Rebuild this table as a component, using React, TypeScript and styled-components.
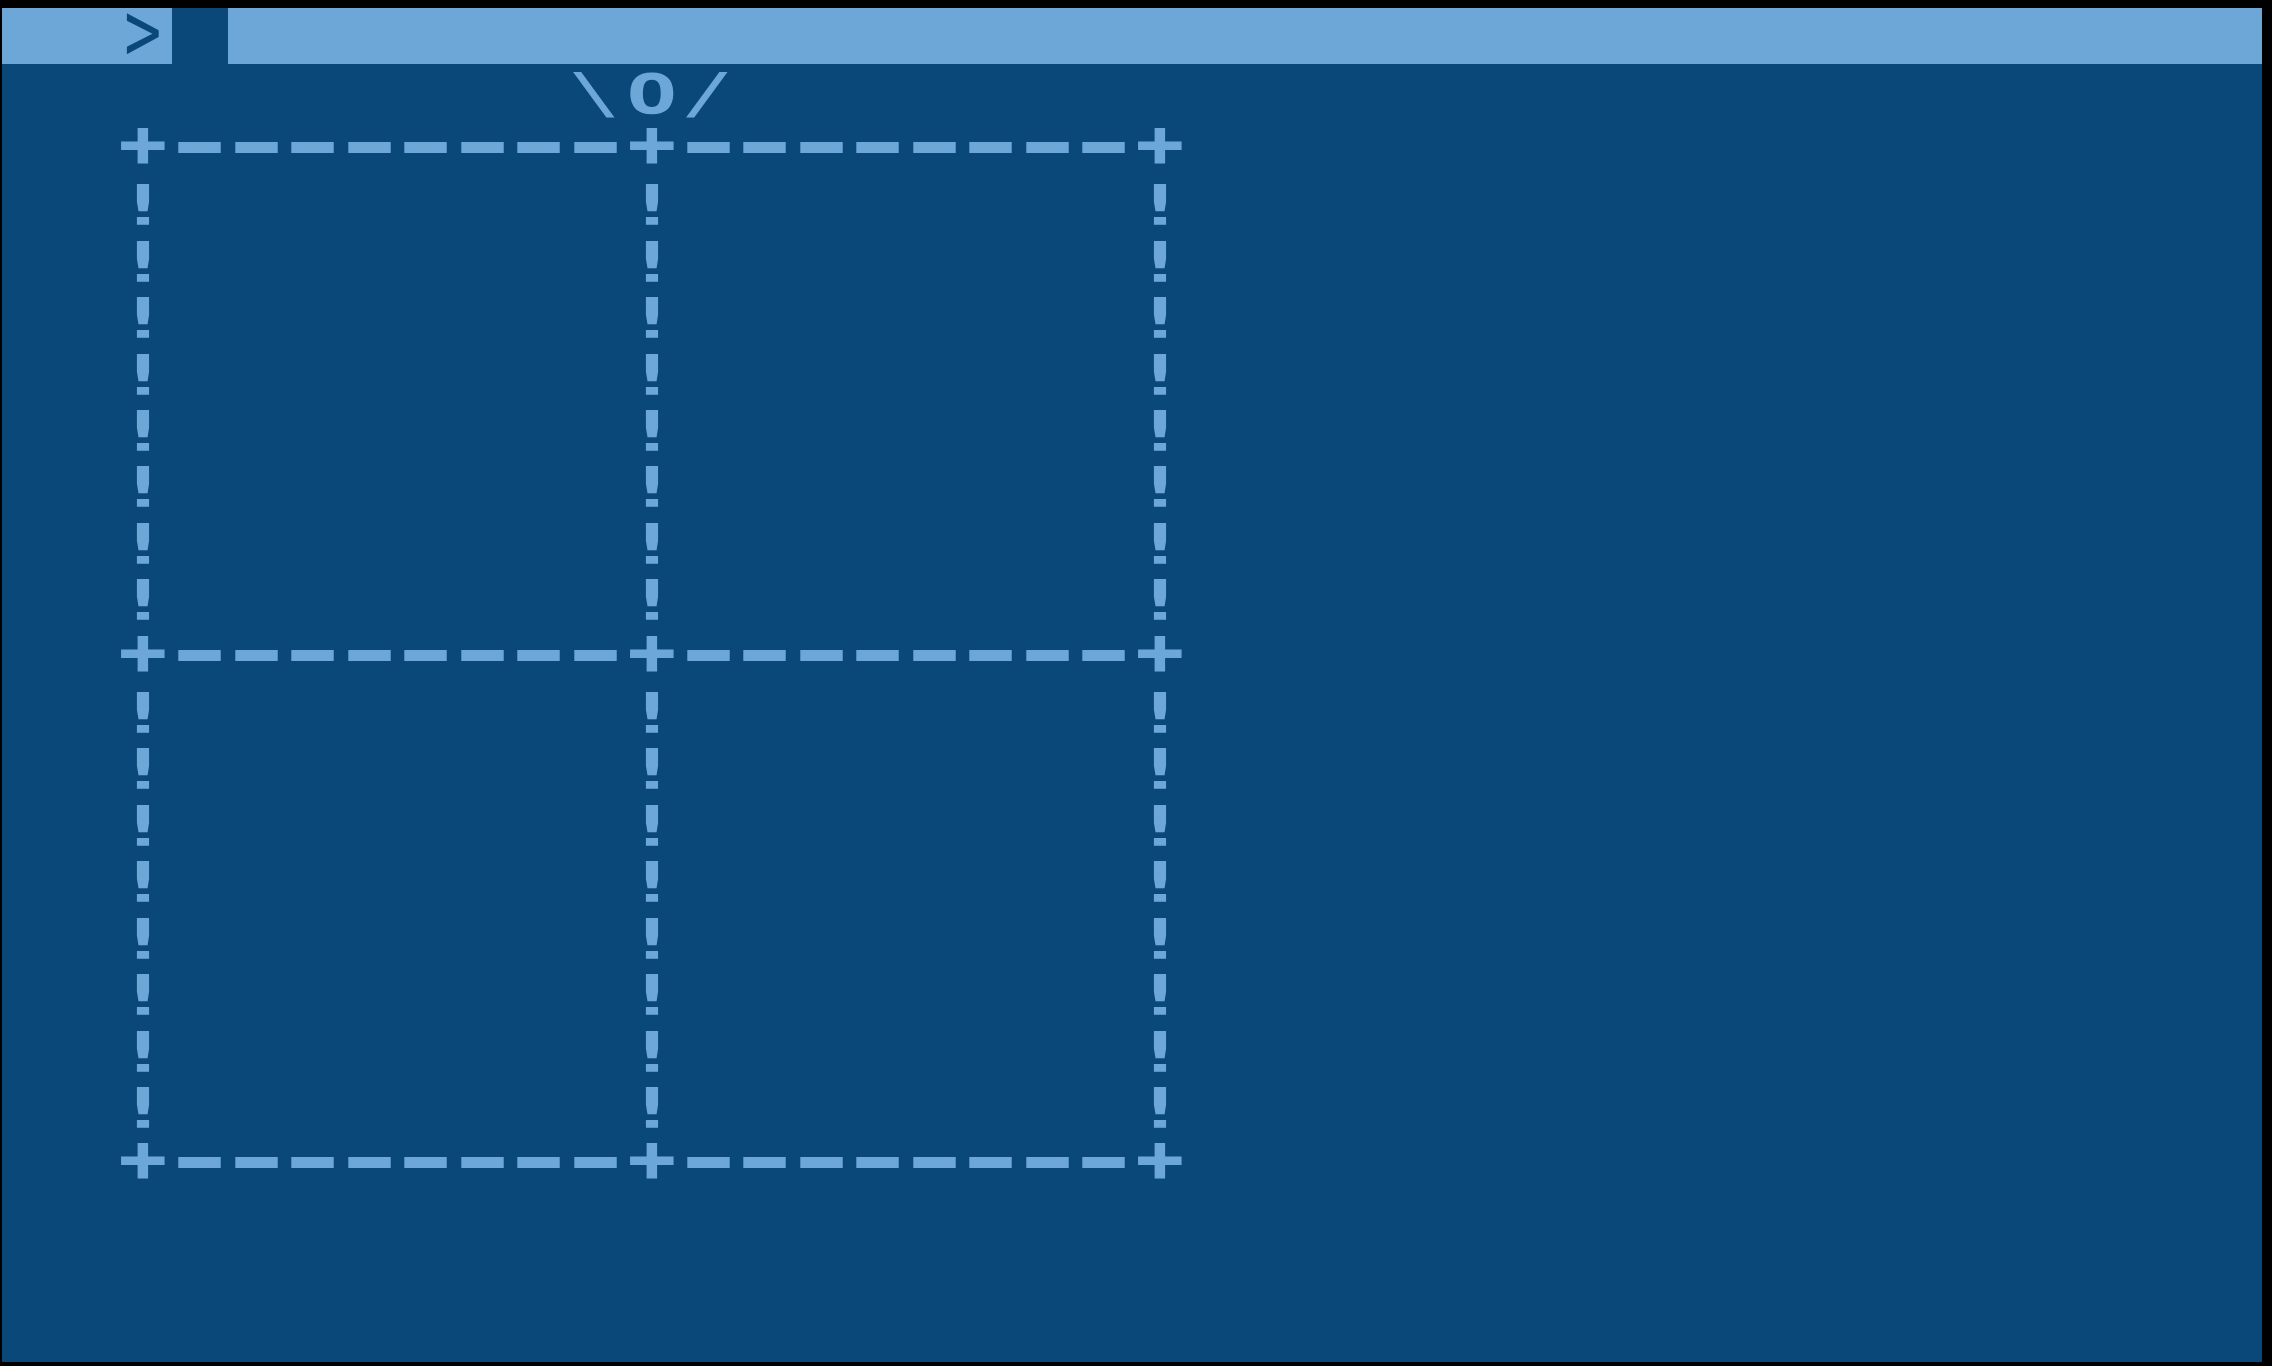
import React from "react";
import styled, { createGlobalStyle } from "styled-components";

const COLS = 40;
const CELL_W = 56.5;
const CELL_H = 1354 / 24;

const DARK = "#0a4879";
const LIGHT = "#6ca7d8";

const MONO = `"DejaVu Sans Mono", "Liberation Mono", monospace`;
const SANS = `"Open Sans", "Noto Sans", sans-serif`;

type Shape = {
  sx: number;
  sy: number;
  dy: number; // final vertical offset of the ink, in screen px
  h: number; // glyph box height before scaling
  weight: number;
  size: number;
  family: string;
  advance: number;
  stroke: number;
};

const mono = (
  sx: number,
  sy: number,
  dy: number,
  h = 38,
  weight = 700,
  stroke = 0
): Shape => ({
  sx,
  sy,
  dy,
  h,
  weight,
  size: 56,
  family: MONO,
  advance: 56 * 0.602,
  stroke,
});

const SHAPES: Record<string, Shape> = {
  "+": mono(1.4, 1.15, -5, 38, 700, 1),
  "-": {
    sx: 2.45,
    sy: 1.35,
    dy: -11,
    h: 30,
    weight: 700,
    size: 66,
    family: SANS,
    advance: 66 * 0.322,
    stroke: 0,
  },
  "!": mono(1.66, 1, 0),
  O: mono(1.5, 1.0, 1),
  "\\": mono(1.55, 1, 0, 38, 400),
  "/": mono(1.55, 1, 0, 38, 400),
  ">": mono(1.1, 1.5, -4, 34, 400),
};
const DEFAULT_SHAPE: Shape = mono(1.6, 1, 0);

const Global = createGlobalStyle`
  html, body { margin: 0; padding: 0; background: #000; }
  body { width: 2272px; height: 1366px; overflow: hidden; }
`;

const Monitor = styled.div`
  width: 2272px;
  height: 1366px;
  box-sizing: border-box;
  padding: 8px 10px 4px 2px;
  background: #000;
`;

const Screen = styled.div`
  width: 2260px;
  height: 1354px;
  background: ${DARK};
  display: flex;
  flex-direction: column;
  color: ${LIGHT};
`;

const Row = styled.div<{ $bar?: boolean }>`
  display: grid;
  grid-template-columns: repeat(${COLS}, ${CELL_W}px);
  height: ${CELL_H}px;
  background: ${(p) => (p.$bar ? LIGHT : "transparent")};
  color: ${(p) => (p.$bar ? DARK : LIGHT)};
`;

const Cell = styled.span<{ $cursor?: boolean }>`
  display: flex;
  align-items: center;
  justify-content: center;
  height: ${CELL_H}px;
  background: ${(p) => (p.$cursor ? DARK : "transparent")};
`;

const Glyph = styled.span<{ $shape: Shape }>`
  display: flex;
  justify-content: center;
  flex: none;
  width: ${(p) => p.$shape.advance}px;
  height: ${(p) => p.$shape.h}px;
  line-height: ${(p) => p.$shape.h + (2 * p.$shape.dy) / p.$shape.sy}px;
  white-space: pre;
  font-family: ${(p) => p.$shape.family};
  font-size: ${(p) => p.$shape.size}px;
  font-weight: ${(p) => p.$shape.weight};
  -webkit-text-stroke: ${(p) => p.$shape.stroke}px currentColor;
  transform: scale(${(p) => p.$shape.sx}, ${(p) => p.$shape.sy});
`;

const box = "  +--------+--------+";
const side = "  !        !        !";
const lines: string[] = [
  "  > ",
  "          \\O/",
  box,
  ...Array(8).fill(side),
  box,
  ...Array(8).fill(side),
  box,
  "",
  "",
  "",
];

const CURSOR_COL = 3;

export default function App() {
  return (
    <>
      <Global />
      <Monitor>
        <Screen>
          {lines.map((line, r) => {
            const chars = line.padEnd(COLS, " ").split("");
            return (
              <Row key={r} $bar={r === 0}>
                {chars.map((ch, c) => (
                  <Cell key={c} $cursor={r === 0 && c === CURSOR_COL}>
                    {ch !== " " && (
                      <Glyph $shape={SHAPES[ch] ?? DEFAULT_SHAPE}>{ch}</Glyph>
                    )}
                  </Cell>
                ))}
              </Row>
            );
          })}
        </Screen>
      </Monitor>
    </>
  );
}
